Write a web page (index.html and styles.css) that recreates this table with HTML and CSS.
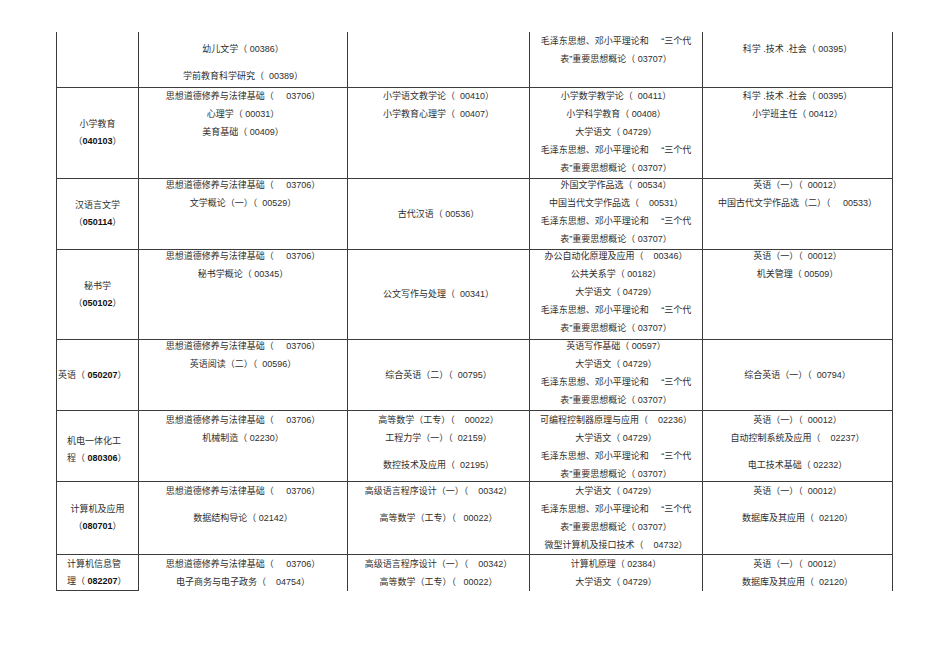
FILE: index.html
```html
<!DOCTYPE html>
<html lang="zh-CN">
<head>
<meta charset="utf-8">
<title>课程表</title>
<link rel="stylesheet" href="styles.css">
</head>
<body>
<div class="tbl">
  <!-- row 1 -->
  <div class="c"></div>
  <div class="c p10"><div class="l">幼儿文学（ 00386）</div><div class="l g">学前教育科学研究（ &nbsp;00389）</div></div>
  <div class="c"></div>
  <div class="c p2"><div class="l">毛泽东思想、邓小平理论和&nbsp;&nbsp;&nbsp;&nbsp;&nbsp;“三个代</div><div class="l">表”重要思想概论（ 03707）</div></div>
  <div class="c p10"><div class="l">科学 .技术 .社会（ 00395）</div></div>

  <!-- row 2 -->
  <div class="c mid k"><div class="l">小学教育</div><div class="l">（<b>040103</b>）</div></div>
  <div class="c p1"><div class="l">思想道德修养与法律基础（ &nbsp;&nbsp;&nbsp;&nbsp;03706）</div><div class="l">心理学（ 00031）</div><div class="l">美育基础（ 00409）</div></div>
  <div class="c p1"><div class="l">小学语文教学论（ &nbsp;00410）</div><div class="l">小学教育心理学（ &nbsp;00407）</div></div>
  <div class="c p1"><div class="l">小学数学教学论（ &nbsp;00411）</div><div class="l">小学科学教育（ 00408）</div><div class="l">大学语文（ 04729）</div><div class="l">毛泽东思想、邓小平理论和&nbsp;&nbsp;&nbsp;&nbsp;&nbsp;“三个代</div><div class="l">表”重要思想概论（ 03707）</div></div>
  <div class="c p1"><div class="l">科学 .技术 .社会（ 00395）</div><div class="l">小学班主任（ 00412）</div></div>

  <!-- row 3 -->
  <div class="c mid k"><div class="l">汉语言文学</div><div class="l">（<b>050114</b>）</div></div>
  <div class="c"><div class="l">思想道德修养与法律基础（ &nbsp;&nbsp;&nbsp;&nbsp;03706）</div><div class="l">文学概论（一）（ &nbsp;00529）</div></div>
  <div class="c mid"><div class="l">古代汉语（ 00536）</div></div>
  <div class="c"><div class="l">外国文学作品选（ &nbsp;00534）</div><div class="l">中国当代文学作品选（ &nbsp;&nbsp;&nbsp;00531）</div><div class="l">毛泽东思想、邓小平理论和&nbsp;&nbsp;&nbsp;&nbsp;&nbsp;“三个代</div><div class="l">表”重要思想概论（ 03707）</div></div>
  <div class="c"><div class="l">英语（一）（ &nbsp;00012）</div><div class="l">中国古代文学作品选（二）（ &nbsp;&nbsp;&nbsp;&nbsp;00533）</div></div>

  <!-- row 4 -->
  <div class="c mid k"><div class="l">秘书学</div><div class="l">（<b>050102</b>）</div></div>
  <div class="c"><div class="l">思想道德修养与法律基础（ &nbsp;&nbsp;&nbsp;&nbsp;03706）</div><div class="l">秘书学概论（ 00345）</div></div>
  <div class="c mid"><div class="l">公文写作与处理（ &nbsp;00341）</div></div>
  <div class="c"><div class="l">办公自动化原理及应用（ &nbsp;&nbsp;&nbsp;00346）</div><div class="l">公共关系学（ 00182）</div><div class="l">大学语文（ 04729）</div><div class="l">毛泽东思想、邓小平理论和&nbsp;&nbsp;&nbsp;&nbsp;&nbsp;“三个代</div><div class="l">表”重要思想概论（ 03707）</div></div>
  <div class="c"><div class="l">英语（一）（ &nbsp;00012）</div><div class="l">机关管理（ 00509）</div></div>

  <!-- row 5 -->
  <div class="c mid left0"><div class="l">英语（ <b>050207</b>）</div></div>
  <div class="c"><div class="l">思想道德修养与法律基础（ &nbsp;&nbsp;&nbsp;&nbsp;03706）</div><div class="l">英语阅读（二）（ &nbsp;00596）</div></div>
  <div class="c mid"><div class="l">综合英语（二）（ &nbsp;00795）</div></div>
  <div class="c"><div class="l">英语写作基础（ 00597）</div><div class="l">大学语文（ 04729）</div><div class="l">毛泽东思想、邓小平理论和&nbsp;&nbsp;&nbsp;&nbsp;&nbsp;“三个代</div><div class="l">表”重要思想概论（ 03707）</div></div>
  <div class="c mid"><div class="l">综合英语（一）（ &nbsp;00794）</div></div>

  <!-- row 6 -->
  <div class="c mid k left shift"><div class="l">机电一体化工</div><div class="l">程（ <b>080306</b>）</div></div>
  <div class="c p2"><div class="l">思想道德修养与法律基础（ &nbsp;&nbsp;&nbsp;&nbsp;03706）</div><div class="l">机械制造（ 02230）</div></div>
  <div class="c p2"><div class="l">高等数学（工专）（ &nbsp;&nbsp;&nbsp;00022）</div><div class="l">工程力学（一）（ &nbsp;02159）</div><div class="l g">数控技术及应用（ &nbsp;02195）</div></div>
  <div class="c p2"><div class="l">可编程控制器原理与应用（ &nbsp;&nbsp;&nbsp;02236）</div><div class="l">大学语文（ 04729）</div><div class="l">毛泽东思想、邓小平理论和&nbsp;&nbsp;&nbsp;&nbsp;&nbsp;“三个代</div><div class="l">表”重要思想概论（ 03707）</div></div>
  <div class="c p2"><div class="l">英语（一）（ &nbsp;00012）</div><div class="l">自动控制系统及应用（ &nbsp;&nbsp;&nbsp;02237）</div><div class="l g">电工技术基础（ 02232）</div></div>

  <!-- row 7 -->
  <div class="c mid k"><div class="l">计算机及应用</div><div class="l">（<b>080701</b>）</div></div>
  <div class="c p2"><div class="l">思想道德修养与法律基础（ &nbsp;&nbsp;&nbsp;&nbsp;03706）</div><div class="l g">数据结构导论（ 02142）</div></div>
  <div class="c p2"><div class="l">高级语言程序设计（一）（ &nbsp;&nbsp;&nbsp;00342）</div><div class="l g">高等数学（工专）（ &nbsp;&nbsp;00022）</div></div>
  <div class="c p2"><div class="l">大学语文（ 04729）</div><div class="l">毛泽东思想、邓小平理论和&nbsp;&nbsp;&nbsp;&nbsp;&nbsp;“三个代</div><div class="l">表”重要思想概论（ 03707）</div><div class="l">微型计算机及接口技术（ &nbsp;&nbsp;&nbsp;04732）</div></div>
  <div class="c p2"><div class="l">英语（一）（ &nbsp;00012）</div><div class="l g">数据库及其应用（ &nbsp;02120）</div></div>

  <!-- row 8 -->
  <div class="c last k left p3"><div class="l">计算机信息管</div><div class="l">理（ <b>082207</b>）</div></div>
  <div class="c open p3"><div class="l">思想道德修养与法律基础（ &nbsp;&nbsp;&nbsp;&nbsp;03706）</div><div class="l">电子商务与电子政务（ &nbsp;&nbsp;&nbsp;04754）</div></div>
  <div class="c open p3"><div class="l">高级语言程序设计（一）（ &nbsp;&nbsp;&nbsp;00342）</div><div class="l">高等数学（工专）（ &nbsp;&nbsp;00022）</div></div>
  <div class="c open p3"><div class="l">计算机原理（ 02384）</div><div class="l">大学语文（ 04729）</div></div>
  <div class="c open p3"><div class="l">英语（一）（ &nbsp;00012）</div><div class="l">数据库及其应用（ &nbsp;02120）</div></div>
</div>
</body>
</html>
```

FILE: styles.css
```css
html, body {
  margin: 0;
  padding: 0;
  background: #ffffff;
}

body {
  font-family: "Liberation Sans", "Noto Sans CJK SC", sans-serif;
  font-size: 9px;
  color: #2e2e2e;
}

.tbl {
  display: grid;
  grid-template-columns: 82px 209px 182px 173px 190px;
  grid-template-rows: 56px 91px 71px 90px 71px 71px 73px 36px;
  width: max-content;
  margin: 32px 0 0 56px;
  border-left: 1px solid #3c3c3c;
}

.c {
  box-sizing: border-box;
  border-right: 1px solid #3c3c3c;
  border-bottom: 1px solid #3c3c3c;
  display: flex;
  flex-direction: column;
  align-items: center;
  justify-content: flex-start;
  overflow: visible;
}

.c.open {
  border-bottom: none;
}

.l {
  line-height: 13px;
  white-space: nowrap;
}

.l + .l {
  margin-top: 5px;
}

.l + .l.g {
  margin-top: 14px;
}

.k .l + .l {
  margin-top: 4px;
}

.l b {
  font-weight: bold;
  color: #111;
}

.mid {
  justify-content: center;
}

.left {
  align-items: flex-start;
  padding-left: 10px;
}

.left0 {
  align-items: flex-start;
  padding-left: 1px;
}

.shift {
  padding-top: 7px;
}

.p1 { padding-top: 1.5px; }
.p2 { padding-top: 2.5px; }
.p3 { padding-top: 3px; }
.p10 { padding-top: 10.5px; }
```
